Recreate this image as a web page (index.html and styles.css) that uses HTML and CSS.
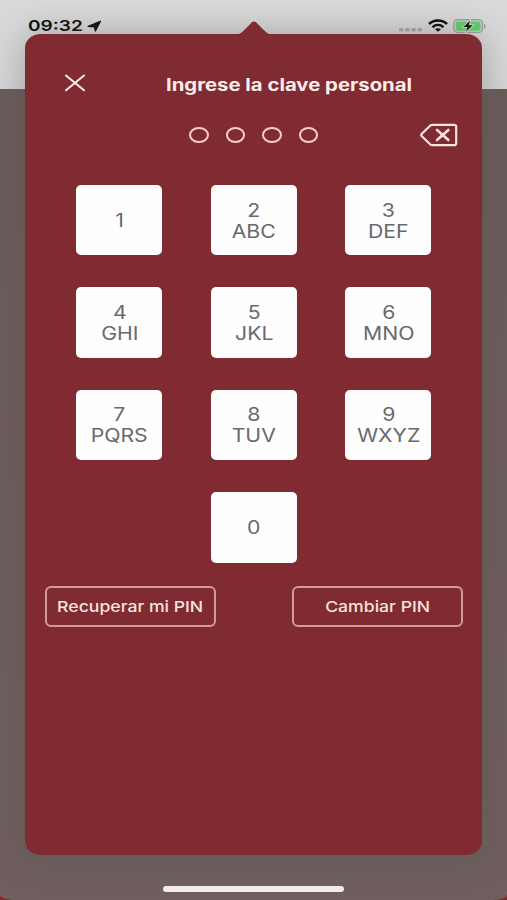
FILE: index.html
```html
<!DOCTYPE html>
<html lang="es">
<head>
  <meta charset="UTF-8">
  <meta name="viewport" content="width=device-width, initial-scale=1.0">
  <title>Clave personal</title>
  <link rel="stylesheet" href="styles.css">
</head>
<body>
  <div class="screen">
    <div class="status-bar">
      <span class="time">09:32</span>
      <svg class="location" width="15" height="13" viewBox="0 0 15 13"><path d="M13.4 1.2 8.4 11.1 7.4 6.9 1.2 6.3z" fill="#0b0b0b" stroke="#0b0b0b" stroke-width="1.2" stroke-linejoin="round"/></svg>
      <div class="status-icons">
        <svg width="24" height="4" viewBox="0 0 24 4" fill="#a9a9a9"><rect x="0" width="4.4" height="3.6" rx="1.3"/><rect x="6.2" width="4.4" height="3.6" rx="1.3"/><rect x="12.4" width="4.4" height="3.6" rx="1.3"/><rect x="18.6" width="4.4" height="3.6" rx="1.3"/></svg>
        <svg class="wifi" width="20" height="13" viewBox="0 0 20 13" fill="none" stroke="#0b0b0b" stroke-width="2.5"><path d="M1 5C6 .2 14 .2 19 5M4.5 8.2c3.3-2.9 7.7-2.9 11 0"/><path d="M7 10.3c1.8-1.5 4.2-1.5 6 0l-3 2.5z" fill="#0b0b0b" stroke="none"/></svg>
        <svg width="34" height="15" viewBox="0 0 34 15"><rect x=".8" y=".8" width="28.6" height="12.6" rx="3.6" fill="none" stroke="#a0a0a0" stroke-width="1.4"/><rect x="2.6" y="2.4" width="25" height="9.4" rx="2" fill="#62cf6c"/><path d="M31 5v4.4c2-.7 2-3.7 0-4.4z" fill="#929292"/><path d="M16.8 1.8 10.6 8h3.9l-1.4 4.6L19.6 6.3h-4z" fill="#0b0b0b" stroke="#bfdcc0" stroke-width="2" paint-order="stroke"/></svg>
      </div>
    </div>

    <div class="card">
      <svg class="pointer" width="40" height="15" viewBox="0 0 40 15"><path d="M1 14.5c5 0 6.500-2 9-4.300l6.500-6.500c2.500-2.800 4.500-2.800 7 0l6.500 6.500c2.500 2.300 4 4.300 9 4.300v.5H1z" fill="#802a32"/></svg>
      <div class="card-header">
        <svg class="close" width="22" height="18" viewBox="0 0 22 18" stroke="#fdeee9" stroke-width="2" stroke-linecap="round"><path d="M2 1.5 20 16.3M20 1.5 2 16.3"/></svg>
        <h1><span class="wide title">Ingrese la clave personal</span></h1>
      </div>
      <div class="pin-row">
        <div class="dots">
          <span class="dot"></span>
          <span class="dot"></span>
          <span class="dot"></span>
          <span class="dot"></span>
        </div>
        <svg class="erase" width="40" height="24" viewBox="0 0 40 24" fill="none" stroke="#fbe3df" stroke-width="2.2" stroke-linejoin="round" stroke-linecap="round"><path d="M14.5 1.8H36c1.5 0 2.2.7 2.2 2v16.400c0 1.300-.7 2-2.200 2H14.500c-1 0-1.700-.3-2.400-.9L3.800 13.200c-.8-.8-.8-1.600 0-2.400l8.300-8.100c.7-.6 1.400-.9 2.400-.9z"/><path d="m19 7 11.400 10M30.400 7 19 17" stroke-width="2.600"/></svg>
      </div>

      <div class="keypad">
        <button class="key"><span class="wide">1</span></button>
        <button class="key"><span class="wide">2<br>ABC</span></button>
        <button class="key"><span class="wide">3<br>DEF</span></button>
        <button class="key"><span class="wide">4<br>GHI</span></button>
        <button class="key"><span class="wide">5<br>JKL</span></button>
        <button class="key"><span class="wide">6<br>MNO</span></button>
        <button class="key"><span class="wide">7<br>PQRS</span></button>
        <button class="key"><span class="wide">8<br>TUV</span></button>
        <button class="key"><span class="wide">9<br>WXYZ</span></button>
        <button class="key key-zero"><span class="wide">0</span></button>
      </div>

      <div class="actions">
        <button class="action"><span class="wide">Recuperar mi PIN</span></button>
        <button class="action"><span class="wide">Cambiar PIN</span></button>
      </div>
    </div>

    <div class="home-bar"></div>
  </div>
</body>
</html>
```
FILE: styles.css
```css
:root {
  --clr-card: #802a32;
  --clr-light: #fdeee9;
  --clr-key-text: #68696c;
}

* {
  box-sizing: border-box;
}

body {
  margin: 0;
  background-color: #802a32;
  font-family: Inter, "Liberation Sans", sans-serif;
}

.screen {
  width: 507px;
  height: 900px;
  display: flex;
  flex-direction: column;
  align-items: center;
  overflow: hidden;
  border-radius: 0 0 14px 14px / 0 0 6px 6px;
  background: linear-gradient(#dadada 0, #d6d6d6 89px, #6b5b5b 89px, #705f5f 100%);
}

.status-bar {
  width: 100%;
  height: 34px;
  padding: 0 20px 0 28px;
  display: flex;
  flex-shrink: 0;
  align-items: flex-start;
}

.time {
  width: 58px;
  margin-top: 16px;
  font-size: 15px;
  line-height: 20px;
  font-weight: 600;
  color: #0b0b0b;
  transform: scaleX(1.27);
  transform-origin: left;
}

.location {
  margin: 20px 0 0 1px;
}

.status-icons {
  margin-left: auto;
  padding-top: 19px;
  display: flex;
  align-items: flex-start;
}

.status-icons svg:first-child {
  margin: 9px 5px 0 0;
}

.wifi {
  margin-right: 5px;
}

.card {
  position: relative;
  width: 457px;
  height: 821px;
  flex-shrink: 0;
  border-radius: 16px / 14px;
  background-color: var(--clr-card);
  box-shadow: 0 0 36px rgba(75, 80, 75, 0.4);
}

/* little arrow on the top edge of the card */
.pointer {
  position: absolute;
  top: -14px;
  left: 209px;
}

.card-header {
  padding: 40px 0 0 39px;
  display: flex;
  align-items: center;
}

.close {
  margin: 0 0 3px;
}

.card-header h1 {
  width: 246px;
  margin: 1px 0 0 80px;
  font-size: 17px;
  line-height: 20px;
  font-weight: 700;
  color: var(--clr-light);
  white-space: nowrap;
}

.wide {
  display: inline-block;
  transform: scaleX(1.18);
}

.title {
  transform: scaleX(1.195);
  transform-origin: left;
}

.pin-row {
  height: 24px;
  margin-top: 28px;
  padding: 0 24px 0 164px;
  display: flex;
  align-items: center;
  justify-content: space-between;
}

.dots {
  display: flex;
  gap: 17px;
}

.dot {
  width: 19.6px;
  height: 16px;
  border: 2px solid #f8cdc8;
  border-radius: 50%;
}

.keypad {
  margin: 38px 0 0 51.4px;
  display: grid;
  grid-template-columns: repeat(3, 86px);
  grid-auto-rows: 70.4px;
  gap: 32px 48.5px;
}

.key {
  padding: 1px 0 0;
  border: none;
  border-radius: 5px;
  background-color: #fefefe;
  font-family: inherit;
  font-size: 18px;
  line-height: 21px;
  color: var(--clr-key-text);
}

.key-zero {
  grid-column: 2;
}

.actions {
  margin-top: 23.5px;
  padding: 0 19px 0 20px;
  display: flex;
  justify-content: space-between;
}

.action {
  width: 171px;
  height: 41px;
  padding: 0;
  border: 2px solid #d39d97;
  border-radius: 6px;
  background: none;
  font-family: inherit;
  font-size: 15px;
  font-weight: 450;
  color: #fbe3df;
  white-space: nowrap;
}

.action .wide {
  transform: scaleX(1.175);
}

.home-bar {
  width: 181px;
  height: 6px;
  margin-top: 31px;
  flex-shrink: 0;
  border-radius: 3px;
  background-color: #f3eeec;
}
```
